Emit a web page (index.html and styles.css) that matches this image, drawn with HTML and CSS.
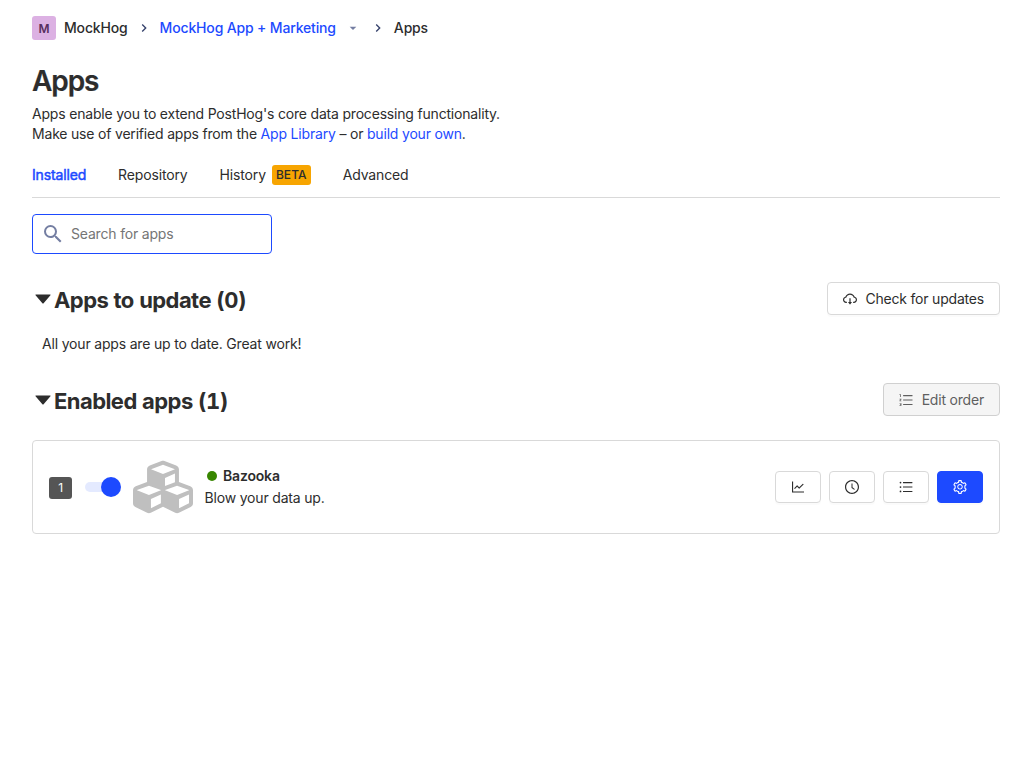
FILE: index.html
```html
<!DOCTYPE html>
<html lang="en">
<head>
<meta charset="utf-8">
<title>Apps</title>
<link rel="stylesheet" href="styles.css">
</head>
<body>
<main class="page">
  <nav class="breadcrumbs">
    <span class="lettermark">M</span>
    <span class="crumb crumb-org">MockHog</span>
    <svg class="separator" viewBox="0 0 24 24"><path d="M8.59 16.59 13.17 12 8.59 7.41 10 6l6 6-6 6z"/></svg>
    <a class="crumb crumb-project">MockHog App + Marketing</a>
    <svg class="crumb-caret" viewBox="0 0 24 24"><path d="m7 10 5 5 5-5z"/></svg>
    <svg class="separator separator-last" viewBox="0 0 24 24"><path d="M8.59 16.59 13.17 12 8.59 7.41 10 6l6 6-6 6z"/></svg>
    <span class="crumb">Apps</span>
  </nav>

  <h1 class="title">Apps</h1>
  <p class="caption">Apps enable you to extend PostHog's core data processing functionality.<br>Make use of verified apps from the <a>App Library</a> – or <a>build your own</a>.</p>

  <div class="tabs">
    <span class="tab tab-active">Installed</span>
    <span class="tab">Repository</span>
    <span class="tab tab-history">History <span class="beta">BETA</span></span>
    <span class="tab">Advanced</span>
  </div>

  <label class="search">
    <svg class="search-icon" viewBox="0 0 24 24"><path d="M15.5 14h-.79l-.28-.27A6.47 6.47 0 0 0 16 9.5 6.5 6.5 0 1 0 9.5 16c1.61 0 3.09-.59 4.23-1.57l.27.28v.79l5 4.99L20.49 19zm-6 0C7.01 14 5 11.99 5 9.5S7.01 5 9.5 5 14 7.01 14 9.5 11.99 14 9.5 14z"/></svg>
    <input class="search-input" type="text" placeholder="Search for apps">
  </label>

  <section class="section-head section-update">
    <h2 class="heading"><svg class="caret" viewBox="0 0 1024 1024"><path d="M840.4 300H183.6c-19.7 0-30.7 20.8-18.5 35l328.4 380.8c9.4 10.9 27.5 10.9 37 0L858.9 335c12.2-14.2 1.2-35-18.5-35z"/></svg><span>Apps to update (0)</span></h2>
    <button class="button">
      <svg class="icon" viewBox="0 0 1024 1024"><path d="M624 706.3h-74.1V464c0-4.4-3.6-8-8-8h-60c-4.4 0-8 3.6-8 8v242.3H400c-6.7 0-10.4 7.7-6.3 12.9l112 141.9a8 8 0 0012.6 0l112-141.9c4.1-5.2.4-12.9-6.3-12.9z"/><path d="M811.4 366.7C765.6 245.9 648.9 160 512.2 160S258.8 245.8 213 366.6C127.3 389.1 64 467.2 64 560c0 110.5 89.5 200 199.9 200H304c4.4 0 8-3.6 8-8v-60c0-4.4-3.6-8-8-8h-40.1c-33.7 0-65.4-13.4-89-37.7-23.5-24.2-36-56.8-34.9-90.6.9-26.4 9.9-51.2 26.2-72.1 16.7-21.3 40.1-36.8 66.1-43.7l37.9-9.9 13.9-36.6c8.6-22.8 20.6-44.1 35.7-63.4a245.6 245.6 0 0152.4-49.9c41.1-28.9 89.5-44.2 140-44.2s98.9 15.3 140 44.2c19.9 14 37.5 30.8 52.4 49.9 15.1 19.3 27.1 40.7 35.7 63.4l13.8 36.5 37.8 10C846.1 454.5 884 503.8 884 560c0 33.1-12.9 64.3-36.3 87.7a123.07 123.07 0 01-87.6 36.3H720c-4.4 0-8 3.6-8 8v60c0 4.4 3.6 8 8 8h40.1C870.5 760 960 670.5 960 560c0-92.7-63.1-170.7-148.6-193.3z"/></svg>
      <span>Check for updates</span>
    </button>
  </section>
  <p class="up-to-date">All your apps are up to date. Great work!</p>

  <section class="section-head section-enabled">
    <h2 class="heading"><svg class="caret" viewBox="0 0 1024 1024"><path d="M840.4 300H183.6c-19.7 0-30.7 20.8-18.5 35l328.4 380.8c9.4 10.9 27.5 10.9 37 0L858.9 335c12.2-14.2 1.2-35-18.5-35z"/></svg><span>Enabled apps (1)</span></h2>
    <button class="button button-disabled" disabled>
      <svg class="icon" viewBox="0 0 1024 1024"><path d="M920 760H336c-4.4 0-8 3.6-8 8v56c0 4.4 3.6 8 8 8h584c4.4 0 8-3.6 8-8v-56c0-4.4-3.6-8-8-8zm0-568H336c-4.4 0-8 3.6-8 8v56c0 4.4 3.6 8 8 8h584c4.4 0 8-3.6 8-8v-56c0-4.4-3.6-8-8-8zm0 284H336c-4.4 0-8 3.6-8 8v56c0 4.4 3.6 8 8 8h584c4.4 0 8-3.6 8-8v-56c0-4.4-3.6-8-8-8zM216 712H100c-2.2 0-4 1.8-4 4v34c0 2.2 1.8 4 4 4h72.4v20.5h-35.7c-2.2 0-4 1.8-4 4v34c0 2.2 1.8 4 4 4h35.7V838H100c-2.2 0-4 1.8-4 4v34c0 2.2 1.8 4 4 4h116c2.2 0 4-1.8 4-4V716c0-2.2-1.8-4-4-4zM100 188h38v120c0 2.2 1.8 4 4 4h40c2.2 0 4-1.8 4-4V152c0-4.4-3.6-8-8-8h-78c-2.2 0-4 1.8-4 4v36c0 2.2 1.8 4 4 4zm116 240H100c-2.2 0-4 1.8-4 4v36c0 2.2 1.8 4 4 4h68.4l-70.3 77.7a8.3 8.3 0 00-2.1 5.4V592c0 2.2 1.8 4 4 4h116c2.2 0 4-1.8 4-4v-36c0-2.2-1.8-4-4-4h-68.4l70.3-77.7a8.3 8.3 0 002.1-5.4V432c0-2.2-1.8-4-4-4z"/></svg>
      <span>Edit order</span>
    </button>
  </section>

  <article class="card">
    <span class="order">1</span>
    <span class="switch"><span class="knob"></span></span>
    <svg class="cubes" viewBox="0 0 512 512"><path d="M488.6 250.2L392 214V105.5c0-15-9.3-28.4-23.4-33.7l-100-37.5c-8.1-3.1-17.1-3.1-25.3 0l-100 37.5c-14.1 5.3-23.4 18.7-23.4 33.7V214l-96.6 36.2C9.3 255.5 0 268.9 0 283.9V394c0 13.6 7.7 26.1 19.9 32.2l100 50c10.1 5.1 22.1 5.1 32.2 0l103.9-52 103.9 52c10.1 5.1 22.1 5.1 32.2 0l100-50c12.2-6.1 19.9-18.6 19.9-32.2V283.9c0-15-9.3-28.4-23.4-33.7zM358 214.8l-85 31.9v-68.2l85-37v73.3zM154 104.1l102-38.2 102 38.2v.6l-102 41.4-102-41.4v-.6zm84 291.1l-85 42.5v-79.1l85-38.8v75.4zm0-112l-102 41.4-102-41.4v-.6l102-38.2 102 38.2v.6zm240 112l-85 42.5v-79.1l85-38.8v75.4zm0-112l-102 41.4-102-41.4v-.6l102-38.2 102 38.2v.6z"/></svg>
    <div class="info">
      <div class="name"><span class="status"></span><strong>Bazooka</strong></div>
      <div>Blow your data up.</div>
    </div>
    <div class="actions">
      <button class="button button-icon"><svg class="icon" viewBox="0 0 1024 1024"><path d="M888 792H200V168c0-4.4-3.6-8-8-8h-56c-4.4 0-8 3.6-8 8v688c0 4.4 3.6 8 8 8h752c4.4 0 8-3.6 8-8v-56c0-4.4-3.6-8-8-8zM305.8 637.7c3.1 3.1 8.1 3.1 11.3 0l138.3-137.6L583 628.5c3.1 3.1 8.2 3.1 11.3 0l275.4-275.3c3.1-3.1 3.1-8.2 0-11.3l-39.6-39.6c-3.1-3.1-8.2-3.1-11.3 0l-230 229.9L461.4 404c-3.1-3.1-8.2-3.1-11.3 0L266.3 586.7c-3.1 3.1-3.1 8.2 0 11.3l39.5 39.7z"/></svg></button>
      <button class="button button-icon"><svg class="icon" viewBox="0 0 1024 1024"><path d="M512 64C264.6 64 64 264.6 64 512s200.6 448 448 448 448-200.6 448-448S759.4 64 512 64zm0 820c-205.4 0-372-166.6-372-372s166.6-372 372-372 372 166.6 372 372-166.6 372-372 372z"/><path d="M686.7 638.6L544.1 535.5V288c0-4.4-3.6-8-8-8H488c-4.4 0-8 3.6-8 8v275.4c0 2.6 1.2 5 3.3 6.5l165.4 120.6c3.6 2.6 8.6 1.8 11.2-1.7l28.6-39c2.6-3.7 1.8-8.7-1.8-11.2z"/></svg></button>
      <button class="button button-icon"><svg class="icon" viewBox="0 0 1024 1024"><path d="M912 192H328c-4.4 0-8 3.6-8 8v56c0 4.4 3.6 8 8 8h584c4.4 0 8-3.6 8-8v-56c0-4.4-3.6-8-8-8zm0 284H328c-4.4 0-8 3.6-8 8v56c0 4.4 3.6 8 8 8h584c4.4 0 8-3.6 8-8v-56c0-4.4-3.6-8-8-8zm0 284H328c-4.4 0-8 3.6-8 8v56c0 4.4 3.6 8 8 8h584c4.4 0 8-3.6 8-8v-56c0-4.4-3.6-8-8-8zM104 228a56 56 0 10112 0 56 56 0 10-112 0zm0 284a56 56 0 10112 0 56 56 0 10-112 0zm0 284a56 56 0 10112 0 56 56 0 10-112 0z"/></svg></button>
      <button class="button button-icon button-primary"><svg class="icon" viewBox="0 0 1024 1024"><path d="M924.8 625.7l-65.5-56c3.1-19 4.7-38.4 4.7-57.8s-1.6-38.8-4.7-57.8l65.5-56a32.03 32.03 0 009.3-35.2l-.9-2.6a443.74 443.74 0 00-79.7-137.9l-1.8-2.1a32.12 32.12 0 00-35.1-9.5l-81.3 28.9c-30-24.6-63.5-44-99.7-57.6l-15.7-85a32.05 32.05 0 00-25.8-25.7l-2.7-.5c-52.1-9.4-106.9-9.4-159 0l-2.7.5a32.05 32.05 0 00-25.8 25.7l-15.8 85.4a351.86 351.86 0 00-99 57.4l-81.9-29.1a32 32 0 00-35.1 9.5l-1.8 2.1a446.02 446.02 0 00-79.7 137.9l-.9 2.6c-4.5 12.5-.8 26.5 9.3 35.2l66.3 56.6c-3.1 18.8-4.6 38-4.6 57.1 0 19.2 1.5 38.4 4.6 57.1L99 625.5a32.03 32.03 0 00-9.3 35.2l.9 2.6c18.1 50.4 44.9 96.9 79.7 137.9l1.8 2.1a32.12 32.12 0 0035.1 9.5l81.9-29.1c29.8 24.5 63.1 43.9 99 57.4l15.8 85.4a32.05 32.05 0 0025.8 25.7l2.7.5a449.4 449.4 0 00159 0l2.7-.5a32.05 32.05 0 0025.8-25.7l15.7-85a350 350 0 0099.7-57.6l81.3 28.9a32 32 0 0035.1-9.5l1.8-2.1c34.8-41.1 61.6-87.5 79.7-137.9l.9-2.6c4.5-12.3.8-26.3-9.3-35zM788.3 465.9c2.5 15.1 3.8 30.6 3.8 46.1s-1.3 31-3.8 46.1l-6.6 40.1 74.7 63.9a370.03 370.03 0 01-42.6 73.6L721 702.8l-31.4 25.8c-23.9 19.6-50.5 35-79.3 45.8l-38.1 14.3-17.9 97a377.5 377.5 0 01-85 0l-17.9-97.2-37.8-14.5c-28.5-10.8-55-26.2-78.7-45.7l-31.4-25.9-93.4 33.2c-17-22.9-31.2-47.6-42.6-73.6l75.5-64.5-6.5-40c-2.4-14.9-3.7-30.3-3.7-45.5 0-15.3 1.2-30.6 3.7-45.5l6.5-40-75.5-64.5c11.3-26.1 25.6-50.7 42.6-73.6l93.4 33.2 31.4-25.9c23.7-19.5 50.2-34.9 78.7-45.7l37.9-14.3 17.9-97.2c28.1-3.2 56.8-3.2 85 0l17.9 97 38.1 14.3c28.7 10.8 55.4 26.2 79.3 45.8l31.4 25.8 92.8-32.9c17 22.9 31.2 47.6 42.6 73.6L781.8 426l6.5 39.9zM512 326c-97.2 0-176 78.8-176 176s78.8 176 176 176 176-78.8 176-176-78.8-176-176-176zm79.2 255.2A111.6 111.6 0 01512 614c-29.9 0-58-11.7-79.2-32.8A111.6 111.6 0 01400 502c0-29.9 11.7-58 32.8-79.2C454 401.6 482.1 390 512 390c29.9 0 58 11.6 79.2 32.8A111.6 111.6 0 01624 502c0 29.9-11.7 58-32.8 79.2z"/></svg></button>
    </div>
  </article>
</main>
</body>
</html>
```
FILE: styles.css
```css
* { box-sizing: border-box; }
body {
  margin: 0;
  background: #fff;
  color: #2d2d2d;
  font: 14px/20px Inter, "Liberation Sans", sans-serif;
  letter-spacing: -0.18px;
}
svg { display: block; flex: none; fill: currentColor; }
h1, h2, p { margin: 0; }
a { color: #1d4aff; }
.page { padding: 16px 32px; }

.breadcrumbs { display: flex; align-items: center; height: 24px; font-weight: 500; letter-spacing: -0.16px; white-space: nowrap; }
.lettermark {
  width: 24px; height: 24px; margin-right: 8px; border-radius: 3px;
  background: #dcb1e3; color: #572e5e;
  font-size: 12px; font-weight: 600; line-height: 25px; text-align: center;
}
.separator { width: 16px; height: 16px; margin: 0 8px; color: #35416b; }
.separator-last { margin-left: 9px; }
.crumb-caret { width: 16px; height: 16px; margin-left: 9px; color: #747ea2; }

.title { margin-top: 25px; font-size: 28px; line-height: 32px; font-weight: 600; letter-spacing: -1.1px; -webkit-text-stroke: .2px currentColor; }
.caption { margin-top: 7px; letter-spacing: -0.19px; }

.tabs { display: flex; gap: 32px; height: 54px; padding-top: 21px; border-bottom: 1px solid #d9d9d9; }
.tab { height: 20px; letter-spacing: -0.15px; white-space: nowrap; }
.tab-active { color: #1d4aff; -webkit-text-stroke: .5px #1d4aff; }
.tab-history { display: flex; gap: 6px; }
.beta {
  height: 20px; padding: 0 4px; border-radius: 3px; letter-spacing: 0.1px;
  background: #f7a501; font-size: 12px; font-weight: 500; line-height: 20px;
}

.search {
  display: flex; align-items: center; width: 240px; height: 40px; margin-top: 16px;
  padding-left: 8px; border: 1px solid #1d4aff; border-radius: 4px;
}
.search-icon { width: 24px; height: 24px; margin-right: 6px; color: #747ea2; }
.search-input { width: 190px; padding: 0; border: 0; outline: 0; background: none; font: inherit; letter-spacing: inherit; }
.search-input::placeholder { color: #757575; opacity: 1; }

.section-head { display: flex; justify-content: space-between; align-items: flex-start; height: 33px; }
.section-update { margin-top: 28px; }
.section-enabled { margin-top: 29px; }
.heading { display: flex; align-items: center; height: 36px; font-size: 22px; line-height: 28px; font-weight: 700; letter-spacing: -0.56px; font-variant-numeric: tabular-nums; white-space: nowrap; }
.caret { width: 22px; height: 22px; margin-bottom: 2px; }
.up-to-date { margin: 19px 0 0 10px; }

.button {
  display: flex; align-items: center; justify-content: center; gap: 7.5px; height: 33px;
  padding: 0 15px 0 14px; border: 1px solid #d9d9d9; border-radius: 4px; background: #fff;
  color: #2d2d2d; font: inherit; letter-spacing: -0.2px; box-shadow: 0 2px 0 rgba(0, 0, 0, .016); white-space: nowrap;
}
.icon { width: 16px; height: 16px; }
.button-disabled { background: #f5f5f5; border-color: #d0d0d0; color: #5f5f5f; box-shadow: none; }
.button-icon { width: 46px; height: 32px; padding: 0; }
.button-primary { border-color: #1d4aff; background: #1d4aff; color: #fff; }

.card { display: flex; align-items: center; height: 94px; margin-top: 24px; padding: 0 16px; border: 1px solid #d9d9d9; border-radius: 4px; }
.order { width: 23px; height: 22px; margin-top: 1px; border-radius: 3px; background: #555; color: #fff; font-size: 12px; line-height: 22px; text-align: center; }
.switch { display: flex; align-items: center; justify-content: flex-end; width: 36px; height: 10px; margin-left: 12.5px; border-radius: 5px; background: linear-gradient(90deg, #e4eaff 28px, transparent 28px); }
.knob { width: 20px; height: 20px; border-radius: 50%; background: #1d4aff; }
.cubes { width: 60px; height: 60px; margin-left: 12px; color: #bfbfbf; }
.info { margin-left: 12px; line-height: 22px; white-space: nowrap; }
.name { display: flex; align-items: center; }
.name strong { font-weight: 600; }
.status { width: 10px; height: 10px; margin: 0 6.5px 0 2px; border-radius: 50%; background: #388600; }
.actions { display: flex; gap: 8px; margin-left: auto; }
```
